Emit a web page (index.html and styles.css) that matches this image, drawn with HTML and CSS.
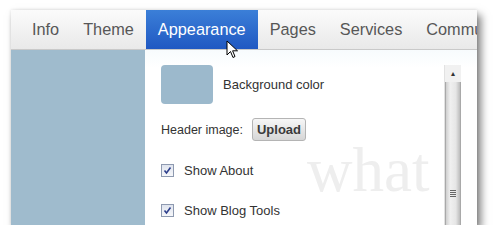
FILE: index.html
```html
<!DOCTYPE html>
<html lang="en">
<head>
    <meta charset="UTF-8">
    <title>Blog settings</title>
    <link rel="stylesheet" href="styles.css">
</head>
<body>
    <div class="window">
        <div class="tabs">
            <div class="tab">Info</div>
            <div class="tab">Theme</div>
            <div class="tab active">Appearance</div>
            <div class="tab">Pages</div>
            <div class="tab">Services</div>
            <div class="tab">Community</div>
        </div>
        <div class="main">
            <div class="sidebar"></div>
            <div class="content">
                <div class="watermark">what</div>
                <div class="form">
                    <div class="row">
                        <div class="swatch"></div>
                        <span>Background color</span>
                    </div>
                    <div class="row header-row">
                        <span class="label">Header image:</span>
                        <button class="upload">Upload</button>
                    </div>
                    <div class="row check-row">
                        <span class="check"><svg width="9" height="9" viewBox="0 0 9 9"><path d="M1.5 4.5 L3.5 7 L7.5 1.5" fill="none" stroke="#2d3f8c" stroke-width="1.6"/></svg></span>
                        <span>Show About</span>
                    </div>
                    <div class="row check-row">
                        <span class="check"><svg width="9" height="9" viewBox="0 0 9 9"><path d="M1.5 4.5 L3.5 7 L7.5 1.5" fill="none" stroke="#2d3f8c" stroke-width="1.6"/></svg></span>
                        <span>Show Blog Tools</span>
                    </div>
                </div>
                <div class="scrollbar">
                    <div class="scroll-up">&#9652;</div>
                    <div class="thumb"><div class="grip"></div></div>
                </div>
            </div>
        </div>
    </div>
    <!-- mouse pointer over the Appearance tab -->
    <svg class="cursor" width="13" height="19" viewBox="0 0 13 19">
        <path d="M1 1 L1 15 L4.5 11.5 L7 17.5 L9 16.5 L6.6 10.8 L11.5 10.8 Z" fill="#fff" stroke="#000" stroke-width="1"/>
    </svg>
</body>
</html>
```

FILE: styles.css
```css
body, html {
    margin: 0;
    padding: 0;
    background: #fff;
    font-family: "Liberation Sans", Arial, sans-serif;
}
.window {
    margin: 10px 0 0 11px;
    width: 466px;
    height: 215px;
    overflow: hidden;
    display: flex;
    flex-direction: column;
    box-shadow: 4px 5px 8px rgba(0, 0, 0, 0.5), 0 0 3px rgba(0, 0, 0, 0.12);
}
.tabs {
    display: flex;
    height: 39px;
    padding-left: 9px;
    background: linear-gradient(#fbfbfb, #e9e9e9);
    border-bottom: 1px solid #c9c9c9;
    white-space: nowrap;
    flex-shrink: 0;
}
.tab {
    padding: 0 12px;
    line-height: 39px;
    font-size: 16.3px;
    color: #575757;
}
.tab.active {
    color: #fff;
    background: linear-gradient(#3b7fd8, #2058c2);
}
.main {
    flex: 1;
    display: flex;
}
.sidebar {
    width: 134px;
    background: #9fbbcd;
}
.content {
    flex: 1;
    display: flex;
    position: relative;
    background: linear-gradient(#f7fbfd, #fff 18px);
}
.watermark {
    position: absolute;
    left: 162px;
    top: 89px;
    font-family: "Liberation Serif", serif;
    font-size: 63px;
    color: #eeeeee;
    line-height: 1;
}
.form {
    flex: 1;
    position: relative;
    padding: 15px 0 0 16px;
    font-size: 13px;
    color: #333;
}
.row {
    display: flex;
    align-items: center;
    gap: 10px;
}
.swatch {
    width: 52px;
    height: 39px;
    border-radius: 4px;
    background: #9cb9cc;
}
.header-row {
    margin-top: 14px;
    gap: 9px;
}
.label {
    font-size: 12.5px;
}
.upload {
    width: 54px;
    height: 23px;
    padding: 0;
    border: 1px solid #b4b4b4;
    border-radius: 3px;
    background: linear-gradient(#f7f7f7, #d6d6d6);
    font-family: "Liberation Sans", Arial, sans-serif;
    font-size: 13px;
    font-weight: bold;
    color: #3a3a3a;
}
.check-row {
    gap: 10px;
    margin-top: 22px;
}
.check-row + .check-row {
    margin-top: 25px;
}
.check {
    width: 11px;
    height: 11px;
    border: 1px solid #8e9ab0;
    background: linear-gradient(#dfe4ee, #f6f7fa);
    display: flex;
    align-items: center;
    justify-content: center;
}
.scrollbar {
    width: 16px;
    margin: 15px 16px 0 0;
    display: flex;
    flex-direction: column;
    border-left: 1px solid #e2e2e2;
}
.scroll-up {
    height: 17px;
    font-size: 8px;
    line-height: 17px;
    text-align: center;
    color: #333;
    background: #f1f1f1;
}
.thumb {
    flex: 1;
    background: linear-gradient(to right, #cfcfcf, #f0f0f0 30%, #e6e6e6 70%, #bcbcbc);
    border-left: 1px solid #a9a9a9;
    border-right: 1px solid #a9a9a9;
    position: relative;
}
.grip {
    position: absolute;
    left: 4px;
    top: 108px;
    width: 6px;
    height: 8px;
    background: repeating-linear-gradient(#666 0 1px, transparent 1px 2px);
}
.cursor {
    position: absolute;
    left: 226px;
    top: 40px;
}
```
